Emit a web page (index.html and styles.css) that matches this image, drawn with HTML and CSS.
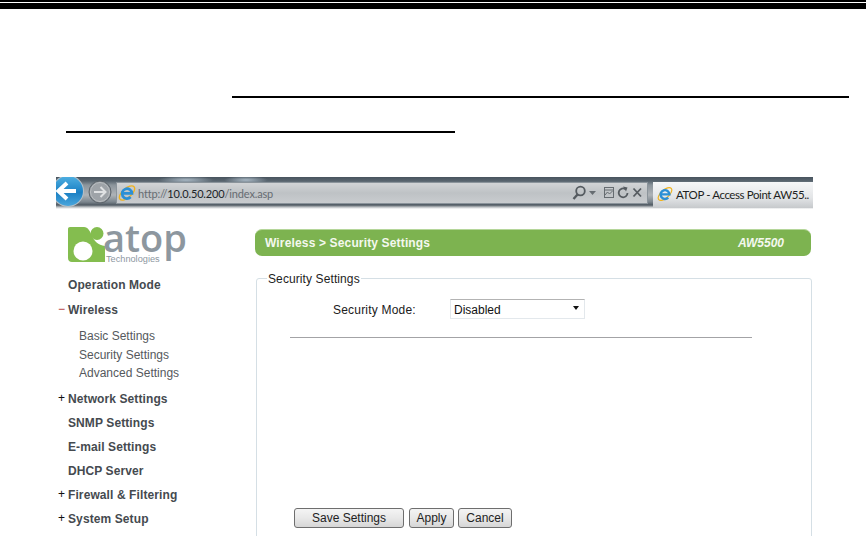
FILE: index.html
```html
<!DOCTYPE html>
<html lang="en">
<head>
<meta charset="utf-8">
<title>ATOP - Access Point AW5500</title>
<link rel="stylesheet" href="styles.css">
</head>
<body>
<div class="page">
  <div class="rule-thin"></div>
  <div class="rule-thick"></div>
  <div class="doc-line doc-line-one"></div>
  <div class="doc-line doc-line-two"></div>

  <div class="shot">
    <div class="toolbar">
      <svg class="nav-back" viewBox="0 0 30 32" width="30" height="32" aria-hidden="true">
        <defs>
          <linearGradient id="backFill" x1="0" y1="0" x2="0" y2="1">
            <stop offset="0" stop-color="#4fb0e2"/>
            <stop offset="0.55" stop-color="#1b80c4"/>
            <stop offset="1" stop-color="#4aa6dc"/>
          </linearGradient>
        </defs>
        <circle cx="12" cy="14" r="16" fill="#b4c0c8"/>
        <circle cx="12" cy="14" r="15" fill="url(#backFill)"/>
        <path d="M2 14H20M11 6 2.500 14l8.500 8" fill="none" stroke="#fff" stroke-width="4"/>
      </svg>
      <svg class="nav-forward" viewBox="0 0 24 24" width="24" height="24" aria-hidden="true">
        <circle cx="12" cy="12" r="11" fill="#8d9399" stroke="#5d656c"/>
        <circle cx="12" cy="12" r="9.500" fill="#9ea3a8" stroke="#bcc0c3"/>
        <path d="M6 12H17M12.500 7l5 5-5 5" fill="none" stroke="#dfe1e3" stroke-width="2"/>
      </svg>
      <div class="address">
        <svg class="ie" viewBox="0 0 20 20" width="18" height="18" aria-hidden="true">
          <ellipse cx="10" cy="10" rx="10.500" ry="5" transform="rotate(-42 10 10)" fill="none" stroke="#efb21e" stroke-width="1.500"/>
          <path d="M4.500 10.500H15.500A5.500 5.500 0 1 0 14 14.500" fill="none" stroke="#2b8fd6" stroke-width="3"/>
        </svg>
        <span class="url">http://<b class="host">10.0.50.200</b>/index.asp</span>
        <span class="addr-tools">
          <svg viewBox="-3 0 73 16" width="73" height="16" aria-hidden="true">
            <circle cx="5.500" cy="6" r="4.300" fill="none" stroke="#555b60" stroke-width="1.800"/>
            <path d="M2.500 9.500-1.500 14" stroke="#555b60" stroke-width="2.400"/>
            <path d="M14 6h7l-3.500 4z" fill="#666c71"/>
            <rect x="29.500" y="2.500" width="9" height="10" fill="none" stroke="#666c71"/>
            <path d="M30 5h8M30 10l2.500-3 2 2 3-3" fill="none" stroke="#666c71"/>
            <path d="M50.500 4.200A4.400 4.400 0 1 0 52.500 8" fill="none" stroke="#555b60" stroke-width="1.800"/>
            <path d="M48 1.500l4.500 1-1.500 4z" fill="#555b60"/>
            <path d="M58.500 3.500l7.500 8M66 3.500l-7.500 8" stroke="#555b60" stroke-width="1.800"/>
          </svg>
        </span>
      </div>
      <div class="tab">
        <svg class="ie" viewBox="0 0 20 20" width="16" height="16" aria-hidden="true">
          <ellipse cx="10" cy="10" rx="10.500" ry="5" transform="rotate(-42 10 10)" fill="none" stroke="#efb21e" stroke-width="1.500"/>
          <path d="M4.500 10.500H15.500A5.500 5.500 0 1 0 14 14.500" fill="none" stroke="#2b8fd6" stroke-width="3"/>
        </svg>
        <span class="tab-title">ATOP - Access Point AW55..</span>
      </div>
    </div>

    <div class="app">
      <nav class="sidebar">
        <svg class="logo" viewBox="0 0 124 38" width="124" height="38" role="img" aria-label="atop Technologies">
          <path d="M2 0H16C20 0 22 4 24 9 26 14 30 18 37 19V35H4C1.500 35 0 33.500 0 31V2C0 .8 .8 0 2 0Z" fill="#84bd4f"/>
          <circle cx="29" cy="6.500" r="6.500" fill="#84bd4f"/>
          <circle cx="15" cy="24" r="9.500" fill="#fff"/>
          <text class="logo-word" x="35" y="25">atop</text>
          <text class="logo-sub" x="38" y="35">Technologies</text>
        </svg>
        <a class="item item-first">Operation Mode</a>
        <a class="item"><span class="sign sign-minus">−</span>Wireless</a>
        <div class="subitems">
          <a class="subitem">Basic Settings</a>
          <a class="subitem">Security Settings</a>
          <a class="subitem">Advanced Settings</a>
        </div>
        <a class="item"><span class="sign">+</span>Network Settings</a>
        <a class="item">SNMP Settings</a>
        <a class="item">E-mail Settings</a>
        <a class="item">DHCP Server</a>
        <a class="item"><span class="sign">+</span>Firewall &amp; Filtering</a>
        <a class="item"><span class="sign">+</span>System Setup</a>
      </nav>

      <main class="main">
        <div class="titlebar">
          <span>Wireless &gt; Security Settings</span>
          <em class="model">AW5500</em>
        </div>
        <fieldset class="panel">
          <legend class="panel-title">Security Settings</legend>
          <div class="field">
            <label class="field-label" for="mode">Security Mode:</label>
            <div class="select-wrap">
              <select class="select" id="mode"><option>Disabled</option></select>
            </div>
          </div>
          <hr class="divider">
          <div class="actions">
            <button class="btn btn-save" type="button">Save Settings</button>
            <button class="btn btn-apply" type="button">Apply</button>
            <button class="btn btn-cancel" type="button">Cancel</button>
          </div>
        </fieldset>
      </main>
    </div>
  </div>
</div>
</body>
</html>
```

FILE: styles.css
```css
* { box-sizing: border-box; }
html, body { margin: 0; padding: 0; background: #fff; }
body { font-family: "Liberation Sans", Arial, sans-serif; }

.page { width: 866px; height: 536px; overflow: hidden; display: flex; flex-direction: column; }
.page > * { flex: none; }

.rule-thin { height: 2px; background: #000; }
.rule-thick { height: 6px; margin-top: 1px; background: #000; }
.doc-line { height: 2px; background: #000; }
.doc-line-one { width: 617px; margin: 87px 0 0 232px; }
.doc-line-two { width: 389px; margin: 33px 0 0 66px; }

.shot { width: 757px; margin: 44px 0 0 56px; }

.toolbar {
  height: 33px;
  display: flex;
  align-items: flex-start;
  overflow: hidden;
  background:
    radial-gradient(ellipse 28px 4px at 130px 3px, #a9b8c4, transparent),
    radial-gradient(ellipse 22px 4px at 190px 3px, #a9b8c4, transparent),
    linear-gradient(#48545e 0, #59656f 4px, #8b949b 8px, #aeb3b7 18px, #7b858d 25px, #4f5962 28px, #b9bdc0 30px, #fff 32px);
}
.nav-back { flex: none; }
.nav-forward { flex: none; margin: 3px 0 0 2px; }

.address {
  flex: none;
  width: 532px;
  height: 22px;
  margin: 5px 0 0 4px;
  padding: 0 2px 0 1px;
  display: flex;
  align-items: center;
  background: linear-gradient(#d2d4d6, #bec2c5 50%, #c9cccf);
  border: 1px solid #8b949b;
}
.ie { flex: none; }
.url { margin-left: 2px; font: 11px Lato, sans-serif; letter-spacing: -0.15px; color: #666c72; white-space: nowrap; }
.host { font-weight: 400; color: #202428; }
.addr-tools { margin-left: auto; display: flex; }

.tab {
  flex: none;
  width: 160px;
  height: 26px;
  margin: 5px 0 0 5px;
  padding: 0 0 2px 4px;
  display: flex;
  align-items: center;
  overflow: hidden;
  background: linear-gradient(#f6f7f8, #e3e5e7 60%, #c6c9cc);
}
.tab-title { margin-left: 3px; font: 11.500px Lato, sans-serif; letter-spacing: -0.4px; color: #1d1f22; white-space: nowrap; }

.app { display: flex; align-items: flex-start; margin-top: 17px; }

.sidebar { flex: none; width: 199px; display: flex; flex-direction: column; }
.logo { margin: 0 0 8px 12px; display: block; overflow: visible; }
.logo-word { font: 600 38px "Open Sans", sans-serif; fill: #8d979f; }
.logo-sub { font: 9.200px "Liberation Sans", sans-serif; fill: #8d979f; }

.item {
  position: relative;
  height: 24px;
  padding-left: 12px;
  font-weight: 700;
  font-size: 12px;
  line-height: 24px;
  color: #454a4f;
  letter-spacing: 0.1px;
}
.item-first { height: 25px; }
.sign {
  position: absolute;
  left: 2px;
  top: -1px;
  font-weight: 400;
  font-size: 12px;
  color: #111;
}
.sign-minus { color: #b03030; }
.subitems { display: flex; flex-direction: column; padding: 5px 0 4px 23px; }
.subitem { height: 18.500px; font-size: 12px; line-height: 18.500px; color: #55595d; }

.main { flex: none; width: 556px; margin-top: 2px; }
.titlebar {
  height: 27px;
  padding: 0 27px 0 10px;
  display: flex;
  align-items: center;
  justify-content: space-between;
  border-radius: 7px;
  background: #7db350;
  border-top: 1px solid #b5d69a;
  color: #f4f8ee;
  font-weight: 700;
  font-size: 12px;
  letter-spacing: 0.15px;
}
.model { font-style: italic; letter-spacing: 0; }

.panel {
  width: 556px;
  margin: 14px 0 0 1px;
  padding: 0;
  min-width: 0;
  border: 1px solid #d5dfe5;
  border-radius: 3px 3px 0 0;
}
.panel-title { margin-left: 10px; padding: 2px 1px 0; font-size: 12px; letter-spacing: 0.1px; line-height: 14px; color: #1d1d1d; }

.field { display: flex; align-items: center; margin-top: 13px; padding-left: 76px; height: 20px; }
.field-label { width: 117px; padding-top: 2px; font-size: 12px; letter-spacing: 0.2px; color: #202020; }
.select-wrap { position: relative; width: 135px; height: 20px; }
.select-wrap::after {
  content: "";
  position: absolute;
  right: 6px;
  top: 7px;
  border: 3px solid transparent;
  border-top: 4px solid #111;
  border-bottom: 0;
}
.select {
  width: 100%;
  height: 100%;
  appearance: none;
  -webkit-appearance: none;
  padding: 2px 0 0 3px;
  font: 12px "Liberation Sans", sans-serif;
  color: #111;
  background: #fff;
  border: 1px solid #e3e8ec;
  border-top-color: #b3b3b3;
  border-radius: 0;
}

.divider { width: 462px; height: 1px; margin: 18px 0 0 33px; padding: 0; border: 0; background: #a3a3a6; }

.actions { display: flex; gap: 5px; margin: 170px 0 60px 37px; }
.btn {
  height: 20px;
  padding: 0;
  font: 12px "Liberation Sans", sans-serif;
  color: #222;
  background: linear-gradient(#f4f4f4, #e8e8e8 50%, #d6d6d6);
  border: 1px solid #6e6e6e;
  border-radius: 3px;
}
.btn-save { width: 110px; }
.btn-apply { width: 45px; }
.btn-cancel { width: 54px; margin-left: -1px; }
```
